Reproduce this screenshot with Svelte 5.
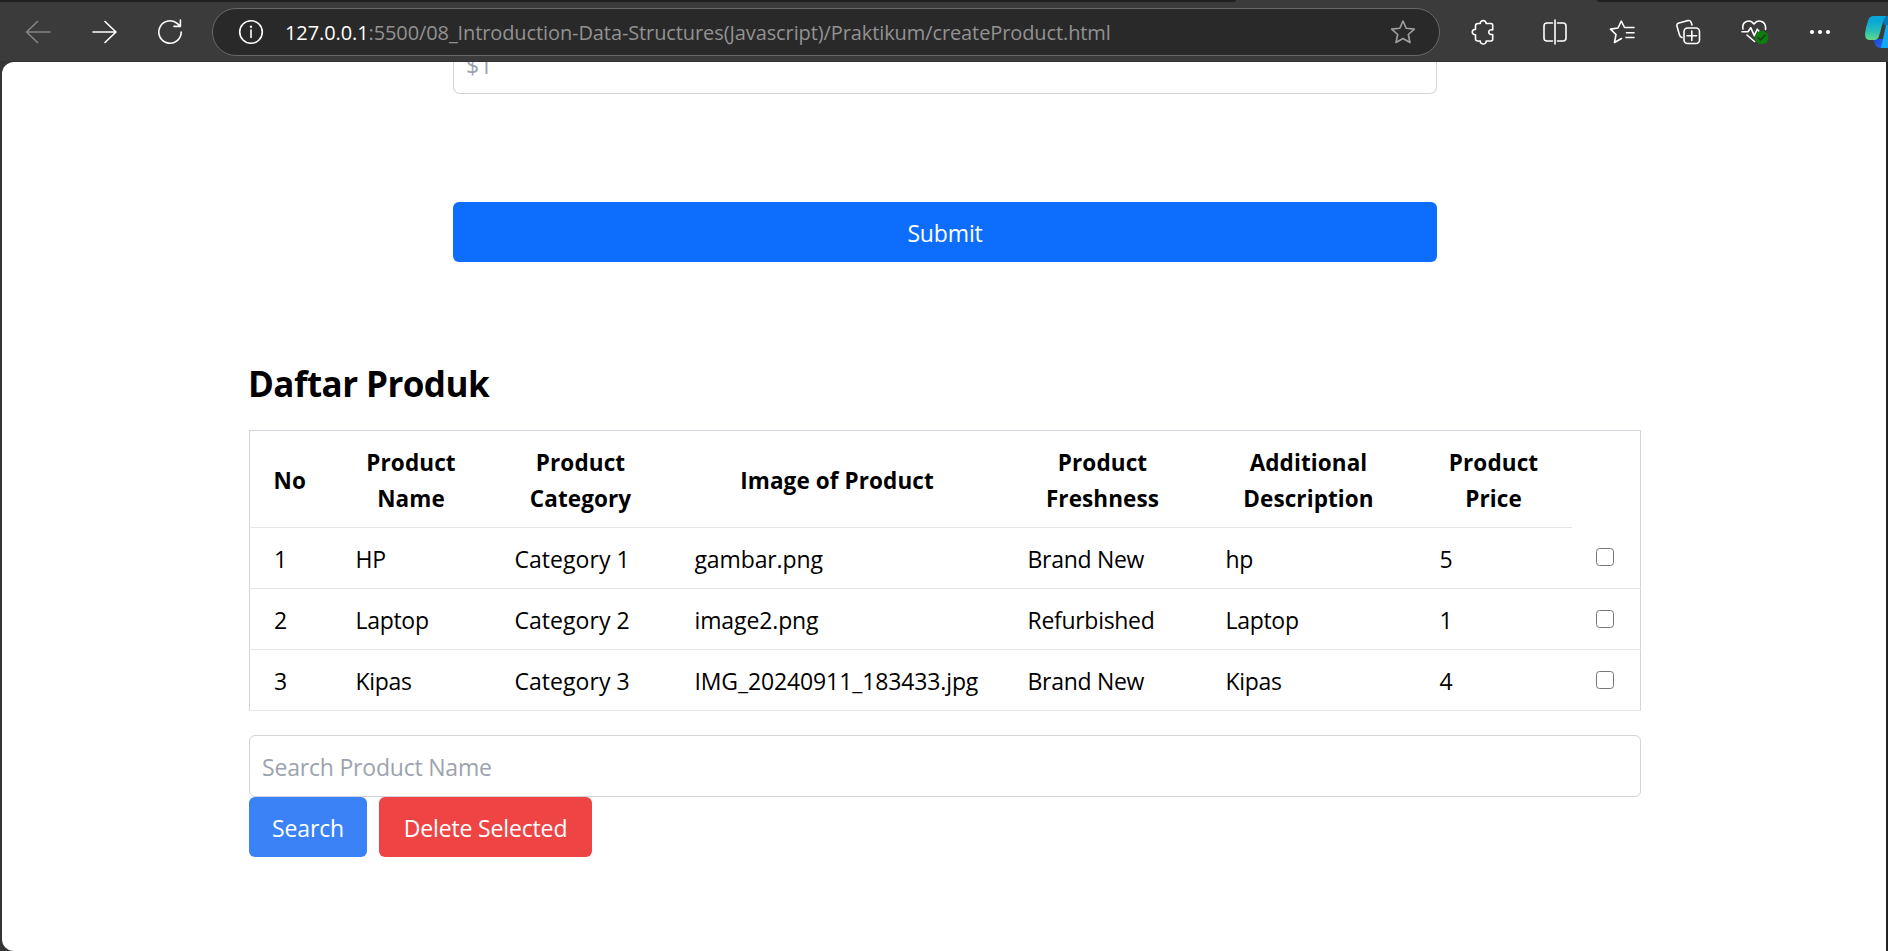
<script>
  const columns = ['No', 'Product Name', 'Product Category', 'Image of Product', 'Product Freshness', 'Additional Description', 'Product Price'];
  const products = [
    ['1', 'HP', 'Category 1', 'gambar.png', 'Brand New', 'hp', '5'],
    ['2', 'Laptop', 'Category 2', 'image2.png', 'Refurbished', 'Laptop', '1'],
    ['3', 'Kipas', 'Category 3', 'IMG_20240911_183433.jpg', 'Brand New', 'Kipas', '4']
  ];
</script>

<div class="browser">
  <header class="toolbar">
    <div class="strip"><i></i><i></i></div>
    <div class="tools">
      <svg class="back dim" width="26" height="24" viewBox="0 0 26 24"><path d="M25 12H2M12.5 1.5L1.500 12l11 10.500" /></svg>
      <svg class="forward" width="26" height="24" viewBox="0 0 26 24"><path d="M1 12h23M13 1.500L24 12 13 22.500" /></svg>
      <svg class="reload" width="26" height="26" viewBox="0 0 26 26"><path d="M24.200 13A11.200 11.200 0 1 1 20.500 4.700L23 7M23.400 1v6.400H17" /></svg>
      <div class="address">
        <svg class="info" width="26" height="26" viewBox="0 0 26 26"><circle cx="13" cy="13" r="11.3" /><path d="M13 11v7.500" /><circle cx="13" cy="7.8" r="1.2" class="solid" /></svg>
        <span class="url"><b>127.0.0.1</b>:5500/08_Introduction-Data-Structures(Javascript)/Praktikum/createProduct.html</span>
        <svg class="star" width="26" height="26" viewBox="0 0 26 26"><path d="M13 2l3.200 7.200 8.100.9-6 5.400 1.700 8L13 19.500 6 23.500l1.700-8-6-5.400 8.100-.9z" /></svg>
      </div>
      <svg class="puzzle" width="24" height="26" viewBox="0 0 24 26"><path d="M4.500 7Q4.500 4.500 7 4.500H9.300C9 .6 15.400.6 15.100 4.500H20Q21.700 4.500 21.700 6.500V11C17 9.500 15.800 16 21.700 15.500V20Q21.700 22 20 22H15.200C15.500 26 9 26 9.300 22H7Q4.500 22 4.500 20V15.700C.2 16 .2 10 4.500 10.400Z" /></svg>
      <span class="rule"></span>
      <svg class="split" width="24" height="26" viewBox="0 0 24 26"><path d="M9.500 4H4Q1 4 1 7v12q0 3 3 3h5.500M12 1v24M14.500 4H20q3 0 3 3v12q0 3-3 3h-5.500" /></svg>
      <svg class="favs" width="26" height="26" viewBox="0 0 26 26"><path d="M15.500 8.500L12.300 2 9 9 1.500 10.100 7 15.500 5.500 23.500l7-4M15.500 8.500H25M17.500 13.700H25M17 18.500h8" /></svg>
      <svg class="collect" width="26" height="26" viewBox="0 0 26 26"><path d="M17 6l-.8-2.500Q15.500 1 13 1.600L4 4Q1.300 4.700 2 7.300L4.500 16q.6 2 2.500 2.500" /><rect x="9" y="9" width="15.5" height="15.5" rx="3.5" /><path d="M16.800 12v9.500M12 16.800h9.500" /></svg>
      <svg class="heart" width="28" height="26" viewBox="0 0 28 26"><path d="M2 10C.5 2 9-.5 13 5c4-5.500 12.500-3 11.500 5.500M1 12.700h6l2.700-4 3.600 8 3-6.500 2 2.500H20M6 16l7.500 6.500" /><circle cx="20.7" cy="18.5" r="6.8" class="green" /><path class="check" d="M17 18.500l2.500 2.500 4.700-5" /></svg>
      <svg class="more" width="22" height="6" viewBox="0 0 22 6"><g class="solid"><circle cx="3" cy="3" r="2.1" /><circle cx="11" cy="3" r="2.1" /><circle cx="19" cy="3" r="2.1" /></g></svg>
      <svg class="copilot" width="24" height="33" viewBox="0 0 24 33">
        <defs>
          <linearGradient id="teal" x1="0" y1="0" x2="0" y2="1"><stop offset=".2" stop-color="#08a7db" /><stop offset=".65" stop-color="#2bbfb4" /><stop offset="1" stop-color="#65da84" /></linearGradient>
          <linearGradient id="blue" x1="0" y1="0" x2="1" y2="1"><stop stop-color="#1b45cf" /><stop offset="1" stop-color="#2869f0" /></linearGradient>
        </defs>
        <path d="M17 0h7v9h-5z" fill="#0878b8" />
        <path d="M8 23h13l-5 9q-5 0-6-4z" fill="url(#blue)" />
        <path d="M21 9h3v23h-8z" fill="#14a8f3" />
        <path d="M9 0h12q-2 2-3 6l-4 14q-1 4-5 4H5q-5 0-5-6Q1 10 3 5q1-5 6-5z" fill="url(#teal)" />
      </svg>
    </div>
  </header>

  <main>
    <div class="form">
      <div class="price"><span>$1</span></div>
      <button class="submit">Submit</button>
    </div>
    <section>
      <h2>Daftar Produk</h2>
      <table>
        <colgroup><col class="c1" /><col class="c2" /><col class="c3" /><col class="c4" /><col class="c5" /><col class="c6" /><col class="c7" /><col /></colgroup>
        <thead>
          <tr>{#each columns as name}<th>{name}</th>{/each}</tr>
        </thead>
        <tbody>
          {#each products as row}
            <tr>
              {#each row as value, i}<td class:category={i === 2} class:file={i === 3}>{value}</td>{/each}
              <td class="pick"><input type="checkbox" aria-label="Select" /></td>
            </tr>
          {/each}
        </tbody>
      </table>
      <input class="search" placeholder="Search Product Name" />
      <div class="actions">
        <button class="find">Search</button>
        <button class="delete">Delete Selected</button>
      </div>
    </section>
  </main>
</div>

<style>
  :global(body) { margin: 0; overflow: hidden; background: #3b3b3b; }
  * { box-sizing: border-box; }
  .browser { display: flex; flex-direction: column; width: 1888px; height: 951px; overflow: hidden; background: linear-gradient(90deg, #353535 50%, #222 50%); font: 23px/36px 'Open Sans', 'Noto Sans', sans-serif; color: #000; }
  .toolbar { flex: none; height: 62px; background: #3b3b3b; border-bottom: 1px solid #343134; }
  .strip { display: flex; justify-content: space-between; height: 2px; }
  .strip i { width: 1236px; background: #202020; border-bottom-right-radius: 3px; }
  .strip i + i { width: 291px; border-radius: 0 0 0 3px; }
  .tools { display: flex; align-items: center; height: 60px; }
  svg { flex: none; display: block; fill: none; stroke: #fff; stroke-width: 1.6; stroke-linecap: round; stroke-linejoin: round; }
  .dim { stroke: #858585; }
  .solid { fill: #fff; stroke: none; }
  .back { margin-left: 25px; }
  .forward { margin-left: 41px; }
  .reload { margin-left: 39px; }
  .address { display: flex; align-items: center; flex: none; width: 1228px; height: 48px; margin-left: 29px; padding: 0 23px 0 25px; border: 1px solid #686868; border-radius: 24px; background: #292929; }
  .url { margin-left: 21px; padding-top: 2px; font-size: 20px; letter-spacing: -0.1px; white-space: nowrap; color: #929292; }
  .url b { font-weight: 400; color: #fff; }
  .star { margin-left: auto; stroke: #a0a0a0; }
  .puzzle { margin-left: 31px; }
  .rule { width: 2px; height: 24px; margin-left: 25px; background: #5c5c5c; }
  .split { margin-left: 23px; }
  .favs { margin-left: 42px; }
  .collect { margin-left: 40px; }
  .heart { margin-left: 40px; }
  .green { fill: #107c10; stroke: none; }
  .check { stroke: #173f17; }
  .more { margin-left: 40px; }
  .copilot { margin-left: 34px; stroke: none; }
  main { flex: 1; width: 1884px; margin-left: 2px; border-radius: 12px 0 0 12px; background: #fff; overflow: hidden; }
  .form { width: 984px; margin-left: 451px; }
  .price { display: flex; align-items: flex-end; height: 32px; padding: 0 0 10px 12px; border: solid #d1d5db; border-width: 0 1px 1px; border-radius: 0 0 7px 7px; color: #9ca3af; overflow: hidden; }
  button { display: block; border: 0; border-radius: 6px; height: 60px; padding: 1px 0 0; font: inherit; color: #fff; letter-spacing: -0.15px; }
  .submit { width: 100%; margin-top: 108px; background: #0d6efd; }
  section { width: 1392px; margin-left: 247px; }
  h2 { margin: 97px 0 0 -1px; height: 71px; font-size: 35px; line-height: 50px; font-weight: 700; letter-spacing: -0.56px; }
  table { width: 1392px; table-layout: fixed; border-collapse: collapse; border: 1px solid #d1d5db; }
  .c1 { width: 82px; } .c2 { width: 159px; } .c3 { width: 180px; } .c4 { width: 333px; } .c5 { width: 198px; } .c6 { width: 214px; } .c7 { width: 156px; }
  th { height: 97px; padding: 4px 20px 0; border-bottom: 1px solid #e5e7eb; font-size: 22.5px; font-weight: 700; letter-spacing: 0.1px; }
  th:first-child { padding-right: 22px; }
  td { height: 61px; padding: 2px 0 0 24px; border-bottom: 1px solid #e5e7eb; white-space: nowrap; letter-spacing: -0.3px; }
  .category { letter-spacing: 0.05px; }
  .file { letter-spacing: -0.12px; }
  .pick { padding-top: 0; }
  .pick input { display: block; appearance: none; width: 18px; height: 18px; margin: 0; border: 1.5px solid #767676; border-radius: 3.5px; background: #fff; }
  tr:first-child .pick { padding-bottom: 1px; }
  .search { display: block; width: 100%; height: 62px; margin-top: 24px; padding: 1px 12px 0; border: 1px solid #d1d5db; border-radius: 6px; font: inherit; letter-spacing: -0.2px; outline: 0; }
  .search::placeholder { color: #9ca3af; opacity: 1; }
  .actions { display: flex; gap: 12px; }
  .find { width: 118px; background: #3b82f6; }
  .delete { width: 213px; background: #ef4444; }
</style>
